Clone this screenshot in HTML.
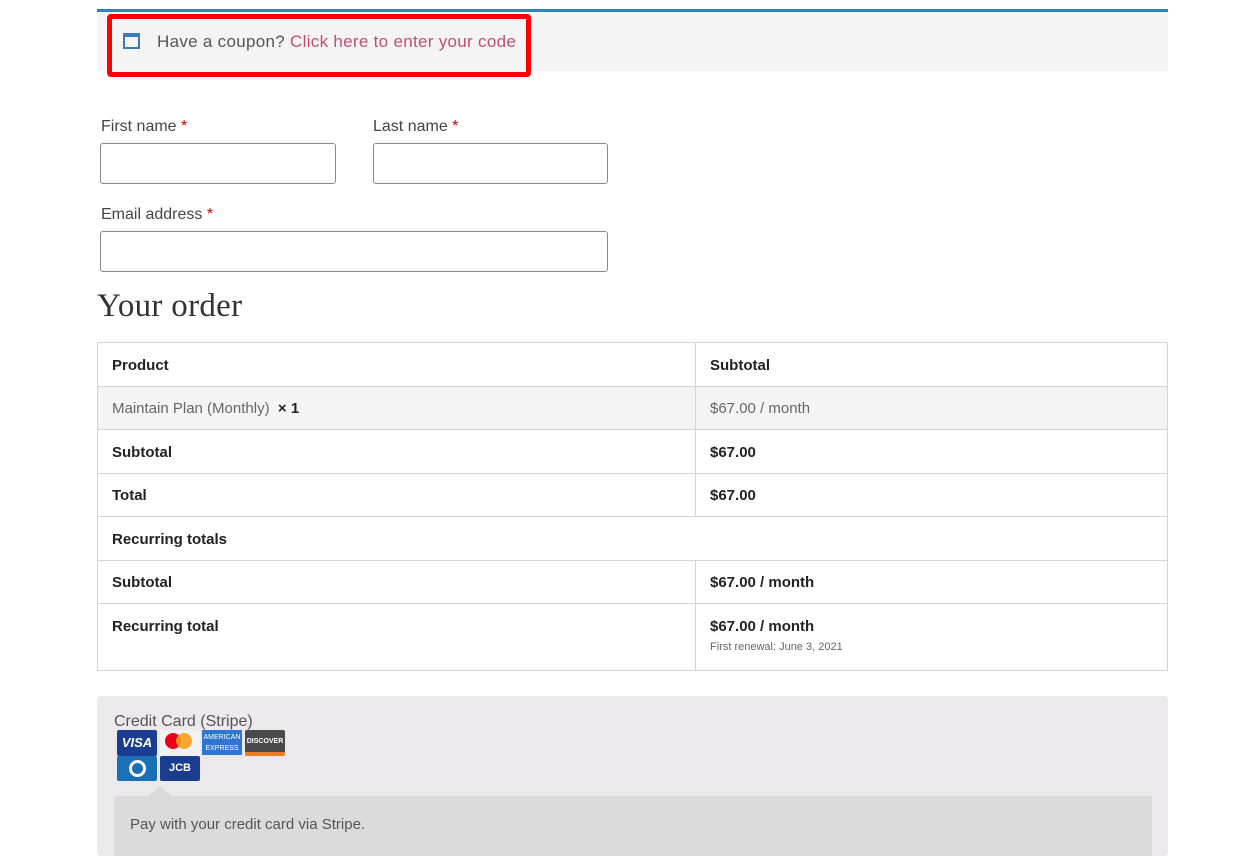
<!DOCTYPE html>
<html><head><style>
*{box-sizing:border-box;margin:0;padding:0}
body{width:1250px;height:852px;background:#fff;font-family:"Liberation Sans",sans-serif;color:#333;position:relative;overflow:hidden}
.a{position:absolute}
.lbl{font-size:16px;color:#444}
.lbl span{color:#c00}
.inp{border:1px solid #888;border-radius:3px;background:#fff;height:41px}
table{position:absolute;left:97px;top:342px;width:1071px;border-collapse:collapse;font-size:15px}
td{border:1px solid #d4d4d4;padding:2px 14px 0;height:43.5px;font-weight:bold;color:#222;vertical-align:middle}
td.c2{width:472px}
</style></head><body>
<div class="a" style="left:97px;top:9px;width:1071px;height:62px;background:#f4f4f5;border-top:3px solid #2e84b6"></div>
<div class="a" style="left:107px;top:14px;width:424px;height:63px;border:5px solid #f00;border-radius:4px"></div>
<div class="a" style="left:123px;top:33px;width:17px;height:16px;border:2px solid #3a7bbf;border-top-width:4px"></div>
<div class="a" style="left:157px;top:32px;font-size:17px;letter-spacing:0.3px;color:#555">Have a coupon? <span style="color:#c0506e">Click here to enter your code</span></div>

<div class="a lbl" style="left:101px;top:118px">First name <span>*</span></div>
<div class="a inp" style="left:100px;top:143px;width:236px"></div>
<div class="a lbl" style="left:373px;top:118px">Last name <span>*</span></div>
<div class="a inp" style="left:373px;top:143px;width:235px"></div>
<div class="a lbl" style="left:101px;top:206px">Email address <span>*</span></div>
<div class="a inp" style="left:100px;top:231px;width:508px"></div>
<div class="a" style="left:97px;top:288px;font-family:'Liberation Serif',serif;font-size:33px;color:#333;letter-spacing:0.3px">Your order</div>

<table>
<tr><td>Product</td><td class="c2">Subtotal</td></tr>
<tr style="background:#f4f4f4"><td style="font-weight:normal;color:#666">Maintain Plan (Monthly) &nbsp;<b style="color:#222">× 1</b></td><td class="c2" style="font-weight:normal;color:#666">$67.00 / month</td></tr>
<tr><td>Subtotal</td><td class="c2">$67.00</td></tr>
<tr><td>Total</td><td class="c2">$67.00</td></tr>
<tr><td colspan="2">Recurring totals</td></tr>
<tr><td>Subtotal</td><td class="c2">$67.00 / month</td></tr>
<tr><td style="height:67px;vertical-align:top;padding-top:14px">Recurring total</td><td class="c2" style="height:67px;vertical-align:top;padding-top:14px">$67.00 / month<div style="font-size:11px;font-weight:normal;color:#666;margin-top:6px">First renewal: June 3, 2021</div></td></tr>
</table>

<div class="a" style="left:97px;top:696px;width:1071px;height:160px;background:#ebe9eb;border-radius:4px"></div>
<div class="a" style="left:114px;top:713px;font-size:16px;color:#555">Credit Card (Stripe)</div>
<div class="a" style="left:117px;top:730px;width:40px;height:26px;background:#1a3d8f;color:#fff;font-size:13px;font-weight:bold;font-style:italic;text-align:center;line-height:26px;border-radius:2px">VISA</div>
<div class="a" style="left:160px;top:730px;width:40px;height:26px;background:#f2f2f2">
 <div class="a" style="left:5px;top:3px;width:16px;height:16px;border-radius:50%;background:#eb001b"></div>
 <div class="a" style="left:16px;top:3px;width:16px;height:16px;border-radius:50%;background:#f79e1b;opacity:.9"></div></div>
<div class="a" style="left:202px;top:730px;width:40px;height:25px;background:#2e77d0;color:#fff;font-size:7px;text-align:center;line-height:11px;padding-top:2px">AMERICAN<br>EXPRESS</div>
<div class="a" style="left:245px;top:730px;width:40px;height:26px;background:#4a4a4a;color:#fff;font-size:7px;font-weight:bold;text-align:center;line-height:24px;border-radius:2px;border-bottom:4px solid #e87d24">DISCOVER</div>
<div class="a" style="left:117px;top:756px;width:40px;height:25px;background:#1a6fb5;border-radius:2px"><div class="a" style="left:12px;top:4px;width:17px;height:17px;border-radius:50%;border:3px solid #fff"></div></div>
<div class="a" style="left:160px;top:756px;width:40px;height:25px;background:#1a3d8f;color:#fff;font-size:11px;font-weight:bold;text-align:center;line-height:25px;border-radius:2px">JCB</div>
<div class="a" style="left:148px;top:786px;width:0;height:0;border-left:12px solid transparent;border-right:12px solid transparent;border-bottom:10px solid #dcdbdc"></div>
<div class="a" style="left:114px;top:796px;width:1038px;height:60px;background:#dcdbdc"></div>
<div class="a" style="left:130px;top:816px;font-size:15px;color:#555">Pay with your credit card via Stripe.</div>
</body></html>
